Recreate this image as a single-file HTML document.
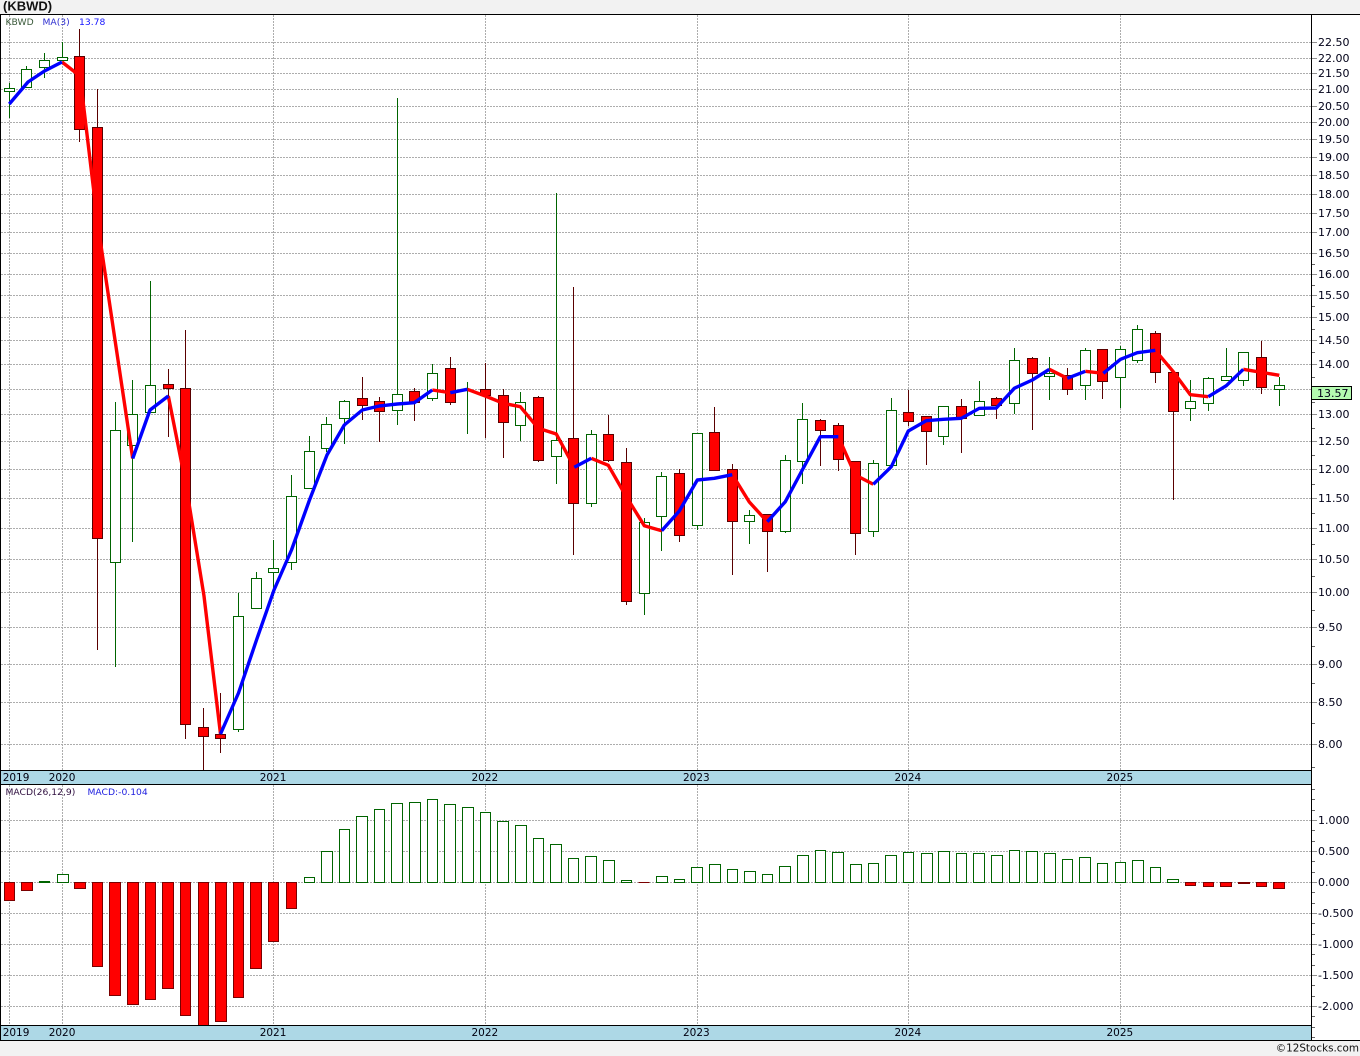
<!DOCTYPE html>
<html><head><meta charset="utf-8"><title>KBWD</title>
<style>
html,body{margin:0;padding:0;background:#fff;width:1360px;height:1056px;overflow:hidden}
svg{display:block}
text{font-family:"DejaVu Sans","Liberation Sans",sans-serif}
.ax{font-size:11px;fill:#000018}
.yr{font-size:10.5px;fill:#000010}
</style></head><body>
<svg width="1360" height="1056" viewBox="0 0 1360 1056" xmlns="http://www.w3.org/2000/svg">
<rect width="1360" height="1056" fill="#fff"/>
<rect width="1360" height="14" fill="#f2f2f2"/>
<rect y="1041" width="1360" height="15" fill="#f2f2f2"/>
<text x="3" y="10.5" style="font-family:'Liberation Sans',sans-serif;font-size:13px;font-weight:bold" fill="#111">(KBWD)</text>

<g fill="none" stroke="#adadad" stroke-dasharray="2 1" shape-rendering="crispEdges">
<path d="M1 42.5H1311M1 58.5H1311M1 73.5H1311M1 89.5H1311M1 106.5H1311M1 122.5H1311M1 139.5H1311M1 157.5H1311M1 175.5H1311M1 194.5H1311M1 213.5H1311M1 232.5H1311M1 253.5H1311M1 274.5H1311M1 295.5H1311M1 317.5H1311M1 340.5H1311M1 364.5H1311M1 389.5H1311M1 414.5H1311M1 441.5H1311M1 469.5H1311M1 498.5H1311M1 528.5H1311M1 559.5H1311M1 592.5H1311M1 627.5H1311M1 664.5H1311M1 702.5H1311M1 744.5H1311"/>
<path d="M1 820.5H1311M1 851.5H1311M1 882.5H1311M1 913.5H1311M1 944.5H1311M1 975.5H1311M1 1006.5H1311"/>
<path d="M9.5 15V770M62.5 15V770M273.5 15V770M485.5 15V770M697.5 15V770M908.5 15V770M1120.5 15V770"/>
<path d="M9.5 785V1025M62.5 785V1025M273.5 785V1025M485.5 785V1025M697.5 785V1025M908.5 785V1025M1120.5 785V1025"/>
</g>

<!-- green candles -->
<g fill="#fff" stroke="#006400" shape-rendering="crispEdges">
<path d="M9.5 83V88M4.5 88.5h10v3h-10zM9.5 92V118"/>
<path d="M26.5 66V69M21.5 69.5h10v18h-10zM26.5 88V88"/>
<path d="M44.5 53V60M39.5 60.5h10v7h-10zM44.5 68V78"/>
<path d="M62.5 42V57M57.5 57.5h10v3h-10z"/>
<path d="M115.5 402V430M110.5 430.5h10v132h-10zM115.5 563V667"/>
<path d="M132.5 380V414M127.5 414.5h10v31h-10zM132.5 446V542"/>
<path d="M150.5 281V385M145.5 385.5h10v27h-10z"/>
<path d="M238.5 593V616M233.5 616.5h10v113h-10zM238.5 730V732"/>
<path d="M256.5 572V578M251.5 578.5h10v30h-10z"/>
<path d="M273.5 540V568M268.5 568.5h10v4h-10zM273.5 573V596"/>
<path d="M291.5 475V496M286.5 496.5h10v66h-10zM291.5 563V570"/>
<path d="M309.5 436V451M304.5 451.5h10v37h-10z"/>
<path d="M326.5 417V424M321.5 424.5h10v24h-10zM326.5 449V452"/>
<path d="M344.5 400V401M339.5 401.5h10v17h-10zM344.5 419V444"/>
<path d="M397.5 98V394M392.5 394.5h10v16h-10zM397.5 411V425"/>
<path d="M432.5 364V373M427.5 373.5h10v25h-10zM432.5 399V401"/>
<path d="M467.5 382V434"/>
<path d="M520.5 392V402M515.5 402.5h10v23h-10zM520.5 426V441"/>
<path d="M556.5 193V440M551.5 440.5h10v16h-10zM556.5 457V484"/>
<path d="M591.5 430V434M586.5 434.5h10v69h-10zM591.5 504V507"/>
<path d="M644.5 518V522M639.5 522.5h10v71h-10zM644.5 594V615"/>
<path d="M661.5 472V476M656.5 476.5h10v40h-10zM661.5 517V551"/>
<path d="M692.5 433.5h10v92h-10zM697.5 526V530"/>
<path d="M749.5 510V515M744.5 515.5h10v6h-10zM749.5 522V544"/>
<path d="M785.5 455V460M780.5 460.5h10v71h-10zM785.5 532V533"/>
<path d="M802.5 403V419M797.5 419.5h10v42h-10zM802.5 462V484"/>
<path d="M873.5 460V463M868.5 463.5h10v68h-10zM873.5 532V537"/>
<path d="M891.5 398V410M886.5 410.5h10v55h-10z"/>
<path d="M938.5 406.5h10v30h-10zM943.5 437V445"/>
<path d="M979.5 381V401M974.5 401.5h10v14h-10z"/>
<path d="M1014.5 348V360M1009.5 360.5h10v43h-10zM1014.5 404V414"/>
<path d="M1049.5 357V373M1044.5 373.5h10v3h-10zM1049.5 377V400"/>
<path d="M1085.5 348V350M1080.5 350.5h10v35h-10zM1085.5 386V400"/>
<path d="M1120.5 346V349M1115.5 349.5h10v28h-10zM1120.5 378V408"/>
<path d="M1137.5 325V329M1132.5 329.5h10v31h-10zM1137.5 361V363"/>
<path d="M1190.5 380V401M1185.5 401.5h10v7h-10zM1190.5 409V421"/>
<path d="M1208.5 377V378M1203.5 378.5h10v25h-10zM1208.5 404V411"/>
<path d="M1226.5 348V376M1221.5 376.5h10v4h-10z"/>
<path d="M1238.5 352.5h10v28h-10zM1243.5 381V386"/>
<path d="M1279.5 377V385M1274.5 385.5h10v4h-10zM1279.5 390V406"/>
</g>

<!-- red candles -->
<g fill="#f00" stroke="#5a0000" shape-rendering="crispEdges">
<path d="M79.5 29V56M74.5 56.5h10v73h-10zM79.5 130V142"/>
<path d="M97.5 89V127M92.5 127.5h10v411h-10zM97.5 539V650"/>
<path d="M168.5 369V384M163.5 384.5h10v4h-10zM168.5 389V437"/>
<path d="M185.5 330V388M180.5 388.5h10v336h-10zM185.5 725V739"/>
<path d="M203.5 708V727M198.5 727.5h10v9h-10zM203.5 737V770"/>
<path d="M220.5 693V734M215.5 734.5h10v4h-10zM220.5 739V753"/>
<path d="M362.5 377V398M357.5 398.5h10v7h-10zM362.5 406V420"/>
<path d="M379.5 397V401M374.5 401.5h10v10h-10zM379.5 412V442"/>
<path d="M414.5 388V391M409.5 391.5h10v11h-10zM414.5 403V421"/>
<path d="M450.5 357V368M445.5 368.5h10v34h-10zM450.5 403V405"/>
<path d="M485.5 363V389M480.5 389.5h10v6h-10zM485.5 396V438"/>
<path d="M503.5 389V395M498.5 395.5h10v27h-10zM503.5 423V458"/>
<path d="M538.5 396V397M533.5 397.5h10v63h-10zM538.5 461V462"/>
<path d="M573.5 287V438M568.5 438.5h10v65h-10zM573.5 504V555"/>
<path d="M608.5 415V434M603.5 434.5h10v26h-10zM608.5 461V462"/>
<path d="M626.5 448V462M621.5 462.5h10v139h-10zM626.5 602V605"/>
<path d="M679.5 469V473M674.5 473.5h10v62h-10zM679.5 536V542"/>
<path d="M714.5 407V432M709.5 432.5h10v38h-10z"/>
<path d="M732.5 464V469M727.5 469.5h10v52h-10zM732.5 522V575"/>
<path d="M762.5 514.5h10v17h-10zM767.5 532V572"/>
<path d="M820.5 419V420M815.5 420.5h10v10h-10zM820.5 431V466"/>
<path d="M838.5 423V425M833.5 425.5h10v34h-10zM838.5 460V471"/>
<path d="M850.5 461.5h10v72h-10zM855.5 534V555"/>
<path d="M908.5 390V412M903.5 412.5h10v9h-10zM908.5 422V426"/>
<path d="M921.5 416.5h10v15h-10zM926.5 432V465"/>
<path d="M961.5 399V406M956.5 406.5h10v12h-10zM961.5 419V453"/>
<path d="M996.5 397V398M991.5 398.5h10v7h-10zM996.5 406V419"/>
<path d="M1032.5 357V358M1027.5 358.5h10v15h-10zM1032.5 374V430"/>
<path d="M1067.5 368V375M1062.5 375.5h10v14h-10zM1067.5 390V395"/>
<path d="M1097.5 349.5h10v32h-10zM1102.5 382V399"/>
<path d="M1155.5 331V333M1150.5 333.5h10v39h-10zM1155.5 373V383"/>
<path d="M1168.5 372.5h10v39h-10zM1173.5 412V500"/>
<path d="M1261.5 341V357M1256.5 357.5h10v30h-10zM1261.5 388V394"/>
</g>

<!-- MA(3) -->
<g fill="none" stroke-width="3.4" stroke-linejoin="round" stroke-linecap="butt">
<g stroke="#ff0000">
<polyline points="62,62 80,76 97.5,222 115,340 132.7,458.5"/>
<polyline points="168.3,396 186,485 204,596 220.5,734"/>
<polyline points="432.3,390 450.3,392.7"/>
<polyline points="467.3,389.3 485.3,396 503.3,403.3 520.3,406.7 538.3,428.3 556.3,434 574.3,467.3"/>
<polyline points="591.3,458.3 608.3,465.3 626.3,496.7 644.3,525.7 661.7,530.7"/>
<polyline points="732.3,474.7 749.3,502 767.3,521.7"/>
<polyline points="838.3,436.7 855.3,475 873.3,484.3"/>
<polyline points="1049.3,369.3 1067.3,378.3"/>
<polyline points="1085.3,371.3 1103.3,373.3"/>
<polyline points="1155.3,350.3 1173.3,371.7 1190.3,394.7 1208.3,396.7"/>
<polyline points="1243.3,369.3 1261.3,372.3 1279.3,375.3"/>
</g>
<g stroke="#0000ff">
<polyline points="9.3,104 28,82 44.5,71 62,62"/>
<polyline points="132.7,458.5 150,410 168.3,396"/>
<polyline points="220.5,734 238.5,693 256.5,640 274,590 291.5,550 309.5,500 327,455 344.3,425 362.3,410 379.3,406 397.3,404 414.3,402.7 432.3,390"/>
<polyline points="450.3,392.7 467.3,389.3"/>
<polyline points="574.3,467.3 591.3,458.3"/>
<polyline points="661.7,530.7 679.3,511 697.3,480 714.3,478.3 732.3,474.7"/>
<polyline points="767.3,521.7 785.3,501.7 802.3,470 820.3,436.7 838.3,436.7"/>
<polyline points="873.3,484.3 891.3,466.7 908.3,431 926.3,420.7 943.3,419.3 961.3,418.3 979.3,408.3 996.3,408 1014.3,388.3 1032.3,380 1049.3,369.3"/>
<polyline points="1067.3,378.3 1085.3,371.3"/>
<polyline points="1103.3,373.3 1120.5,359.3 1137.3,352.7 1155.3,350.3"/>
<polyline points="1208.3,396.7 1226.3,385.7 1243.3,369.3"/>
</g>
</g>

<!-- MACD green -->
<g fill="#fff" stroke="#006400" shape-rendering="crispEdges">
<path d="M39.5 881.5h10v1h-10z"/>
<path d="M57.5 874.5h11v8h-11z"/>
<path d="M304.5 877.5h10v5h-10z"/>
<path d="M321.5 851.5h11v31h-11z"/>
<path d="M339.5 829.5h10v53h-10z"/>
<path d="M356.5 816.5h11v66h-11z"/>
<path d="M374.5 809.5h10v73h-10z"/>
<path d="M391.5 803.5h11v79h-11z"/>
<path d="M409.5 802.5h11v80h-11z"/>
<path d="M427.5 799.5h10v83h-10z"/>
<path d="M444.5 804.5h11v78h-11z"/>
<path d="M462.5 807.5h11v75h-11z"/>
<path d="M480.5 812.5h10v70h-10z"/>
<path d="M497.5 821.5h11v61h-11z"/>
<path d="M515.5 825.5h11v57h-11z"/>
<path d="M533.5 838.5h10v44h-10z"/>
<path d="M550.5 844.5h11v38h-11z"/>
<path d="M568.5 858.5h10v24h-10z"/>
<path d="M585.5 856.5h11v26h-11z"/>
<path d="M603.5 860.5h11v22h-11z"/>
<path d="M621.5 880.5h10v2h-10z"/>
<path d="M656.5 876.5h11v6h-11z"/>
<path d="M674.5 879.5h10v3h-10z"/>
<path d="M691.5 867.5h11v15h-11z"/>
<path d="M709.5 864.5h11v18h-11z"/>
<path d="M727.5 869.5h10v13h-10z"/>
<path d="M744.5 871.5h11v11h-11z"/>
<path d="M762.5 874.5h10v8h-10z"/>
<path d="M779.5 866.5h11v16h-11z"/>
<path d="M797.5 855.5h11v27h-11z"/>
<path d="M815.5 850.5h10v32h-10z"/>
<path d="M832.5 852.5h11v30h-11z"/>
<path d="M850.5 864.5h11v18h-11z"/>
<path d="M868.5 863.5h10v19h-10z"/>
<path d="M885.5 855.5h11v27h-11z"/>
<path d="M903.5 852.5h10v30h-10z"/>
<path d="M921.5 853.5h11v29h-11z"/>
<path d="M938.5 851.5h11v31h-11z"/>
<path d="M956.5 853.5h10v29h-10z"/>
<path d="M973.5 853.5h11v29h-11z"/>
<path d="M991.5 855.5h11v27h-11z"/>
<path d="M1009.5 850.5h10v32h-10z"/>
<path d="M1026.5 851.5h11v31h-11z"/>
<path d="M1044.5 853.5h11v29h-11z"/>
<path d="M1062.5 859.5h10v23h-10z"/>
<path d="M1079.5 857.5h11v25h-11z"/>
<path d="M1097.5 863.5h10v19h-10z"/>
<path d="M1115.5 862.5h10v20h-10z"/>
<path d="M1132.5 860.5h11v22h-11z"/>
<path d="M1150.5 867.5h10v15h-10z"/>
<path d="M1167.5 879.5h11v3h-11z"/>
</g>
<!-- MACD red -->
<g fill="#f00" stroke="#7a0000" shape-rendering="crispEdges">
<path d="M4.5 882.5h10v18h-10z"/>
<path d="M21.5 882.5h11v8h-11z"/>
<path d="M74.5 882.5h11v6h-11z"/>
<path d="M92.5 882.5h10v84h-10z"/>
<path d="M109.5 882.5h11v113h-11z"/>
<path d="M127.5 882.5h11v122h-11z"/>
<path d="M145.5 882.5h10v117h-10z"/>
<path d="M162.5 882.5h11v106h-11z"/>
<path d="M180.5 882.5h10v133h-10z"/>
<path d="M198.5 882.5h10v143h-10z"/>
<path d="M215.5 882.5h11v139h-11z"/>
<path d="M233.5 882.5h10v115h-10z"/>
<path d="M250.5 882.5h11v86h-11z"/>
<path d="M268.5 882.5h10v59h-10z"/>
<path d="M286.5 882.5h10v26h-10z"/>
<path d="M638.5 882.5h11v0h-11z"/>
<path d="M1185.5 882.5h10v3h-10z"/>
<path d="M1203.5 882.5h10v4h-10z"/>
<path d="M1220.5 882.5h11v4h-11z"/>
<path d="M1238.5 882.5h11v1h-11z"/>
<path d="M1256.5 882.5h10v4h-10z"/>
<path d="M1273.5 882.5h11v6h-11z"/>
</g>

<!-- bands -->
<rect x="1" y="771" width="1310" height="13" fill="#add8e6"/>
<rect x="1" y="1026" width="1310" height="14" fill="#add8e6"/>
<g fill="#000" shape-rendering="crispEdges">
<rect x="0" y="14" width="1360" height="1"/>
<rect x="0" y="14" width="1" height="1027"/>
<rect x="1311" y="14" width="1" height="1027"/>
<rect x="0" y="770" width="1311" height="1"/>
<rect x="0" y="784" width="1311" height="1"/>
<rect x="0" y="1025" width="1311" height="1"/>
<rect x="0" y="1040" width="1360" height="1"/>
</g>

<!-- axis ticks -->
<g fill="none" shape-rendering="crispEdges">
<path stroke="#909090" d="M1312 42.5h5M1312 58.5h5M1312 73.5h5M1312 89.5h5M1312 106.5h5M1312 122.5h5M1312 139.5h5M1312 157.5h5M1312 175.5h5M1312 194.5h5M1312 213.5h5M1312 232.5h5M1312 253.5h5M1312 274.5h5M1312 295.5h5M1312 317.5h5M1312 340.5h5M1312 364.5h5M1312 389.5h5M1312 414.5h5M1312 441.5h5M1312 469.5h5M1312 498.5h5M1312 528.5h5M1312 559.5h5M1312 592.5h5M1312 627.5h5M1312 664.5h5M1312 702.5h5M1312 744.5h5M1312 820.5h5M1312 851.5h5M1312 882.5h5M1312 913.5h5M1312 944.5h5M1312 975.5h5M1312 1006.5h5"/>
<path stroke="#666" d="M1312 264.5h3M1312 285.5h3M1312 306.5h3M1312 329.5h3M1312 352.5h3M1312 377.5h3M1312 402.5h3M1312 428.5h3M1312 455.5h3M1312 484.5h3M1312 513.5h3M1312 544.5h3M1312 576.5h3M1312 610.5h3M1312 646.5h3M1312 683.5h3M1312 723.5h3M1312 767.5h3M1312 789.5h3M1312 799.5h3M1312 810.5h3M1312 830.5h3M1312 841.5h3M1312 861.5h3M1312 872.5h3M1312 892.5h3M1312 903.5h3M1312 923.5h3M1312 934.5h3M1312 954.5h3M1312 965.5h3M1312 985.5h3M1312 996.5h3M1312 1016.5h3M1312 1027.5h3M1312 1037.5h3"/>
</g>

<!-- axis labels -->
<g class="ax">
<text x="1318" y="46">22.50</text><text x="1318" y="62">22.00</text><text x="1318" y="77">21.50</text><text x="1318" y="93">21.00</text>
<text x="1318" y="110">20.50</text><text x="1318" y="126">20.00</text><text x="1318" y="143">19.50</text><text x="1318" y="161">19.00</text>
<text x="1318" y="179">18.50</text><text x="1318" y="198">18.00</text><text x="1318" y="217">17.50</text><text x="1318" y="236">17.00</text>
<text x="1318" y="257">16.50</text><text x="1318" y="278">16.00</text><text x="1318" y="299">15.50</text><text x="1318" y="321">15.00</text>
<text x="1318" y="344">14.50</text><text x="1318" y="368">14.00</text><text x="1318" y="418">13.00</text>
<text x="1318" y="445">12.50</text><text x="1318" y="473">12.00</text><text x="1318" y="502">11.50</text><text x="1318" y="532">11.00</text>
<text x="1318" y="563">10.50</text><text x="1318" y="596">10.00</text><text x="1318" y="631">9.50</text><text x="1318" y="668">9.00</text>
<text x="1318" y="706">8.50</text><text x="1318" y="748">8.00</text>
<text x="1318" y="824">1.000</text><text x="1318" y="855">0.500</text><text x="1318" y="886">0.000</text><text x="1318" y="917">-0.500</text>
<text x="1318" y="948">-1.000</text><text x="1318" y="979">-1.500</text><text x="1318" y="1010">-2.000</text>
</g>

<!-- last price tag -->
<rect x="1311.5" y="386.5" width="40" height="13" fill="#b4fbb0" stroke="#000" shape-rendering="crispEdges"/>
<text x="1317" y="397" class="ax">13.57</text>

<!-- year labels -->
<g class="yr">
<text x="2.7" y="781">2019</text><text x="48.7" y="781">2020</text><text x="259.7" y="781">2021</text><text x="471.5" y="781">2022</text><text x="683" y="781">2023</text><text x="894.5" y="781">2024</text><text x="1106.5" y="781">2025</text>
<text x="2.7" y="1036">2019</text><text x="48.7" y="1036">2020</text><text x="259.7" y="1036">2021</text><text x="471.5" y="1036">2022</text><text x="683" y="1036">2023</text><text x="894.5" y="1036">2024</text><text x="1106.5" y="1036">2025</text>
</g>

<!-- legends -->
<g>
<text x="5.5" y="25" style="font-size:9.2px" fill="#3a5a3a">KBWD</text>
<text x="42.5" y="25" style="font-size:9.2px" fill="#3030d0">MA(3)</text>
<text x="79" y="25" style="font-size:9.2px" fill="#1414ff">13.78</text>
<text x="5.5" y="795" style="font-size:9.2px" fill="#301040">MACD(26,12,9)</text>
<text x="87.5" y="795" style="font-size:9.2px" fill="#2020e0">MACD:-0.104</text>
</g>

<text x="1359" y="1051.5" text-anchor="end" style="font-size:10.4px" fill="#111">©12Stocks.com</text>
</svg>
</body></html>
